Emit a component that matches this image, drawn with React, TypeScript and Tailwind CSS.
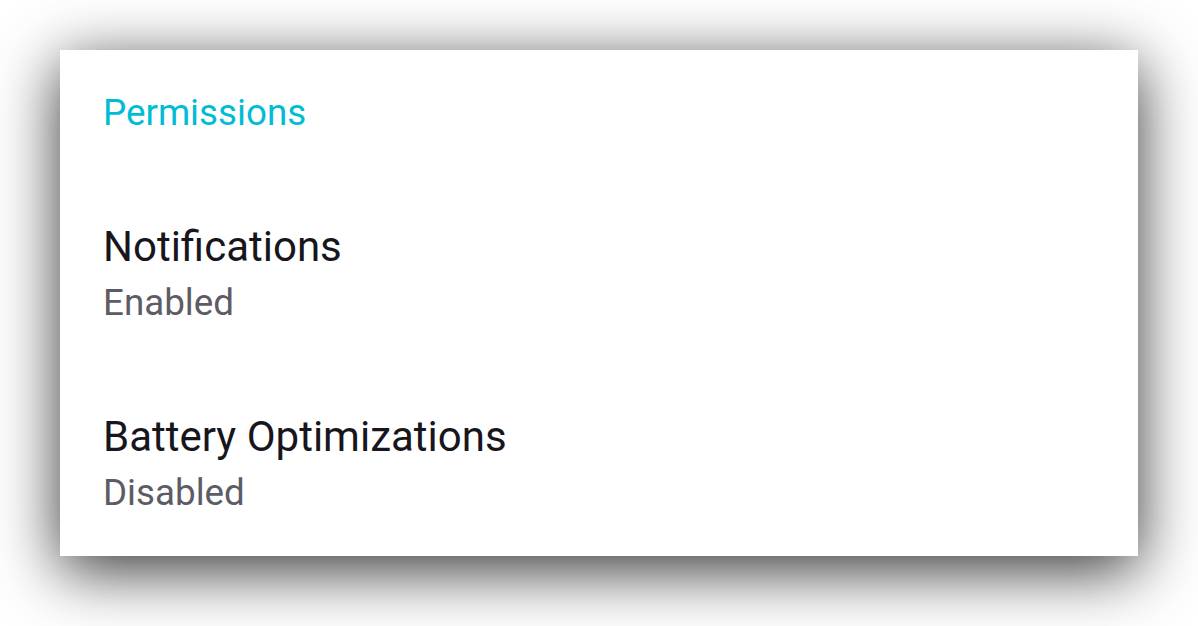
import React from 'react'

type Pref = { title: string; summary: string }

const prefs: Pref[] = [
  { title: 'Notifications', summary: 'Enabled' },
  { title: 'Battery Optimizations', summary: 'Disabled' },
]

const PrefRow = ({ pref }: { pref: Pref }) => (
  <div className="flex flex-col mt-[95px]">
    <div className="text-[42px] leading-[42px] text-[#17161c]">{pref.title}</div>
    <div className="text-[36.75px] leading-[37px] text-[#5d5c66] mt-[16px]">{pref.summary}</div>
  </div>
)

export default function App() {
  return (
    <div
      className="w-[1198px] h-[626px] bg-white pt-[50px] pl-[60px] overflow-hidden"
      style={{ fontFamily: 'Roboto, "Noto Sans", sans-serif' }}
    >
      <div className="w-[1078px] bg-white shadow-[0_14px_60px_rgba(0,0,0,0.8)] pl-[43px] pt-[44px] pb-[45px] flex flex-col">
        <div className="text-[36.75px] leading-[37px] text-[#00bcd4]">Permissions</div>
        {prefs.map((p) => (
          <PrefRow key={p.title} pref={p} />
        ))}
      </div>
    </div>
  )
}
